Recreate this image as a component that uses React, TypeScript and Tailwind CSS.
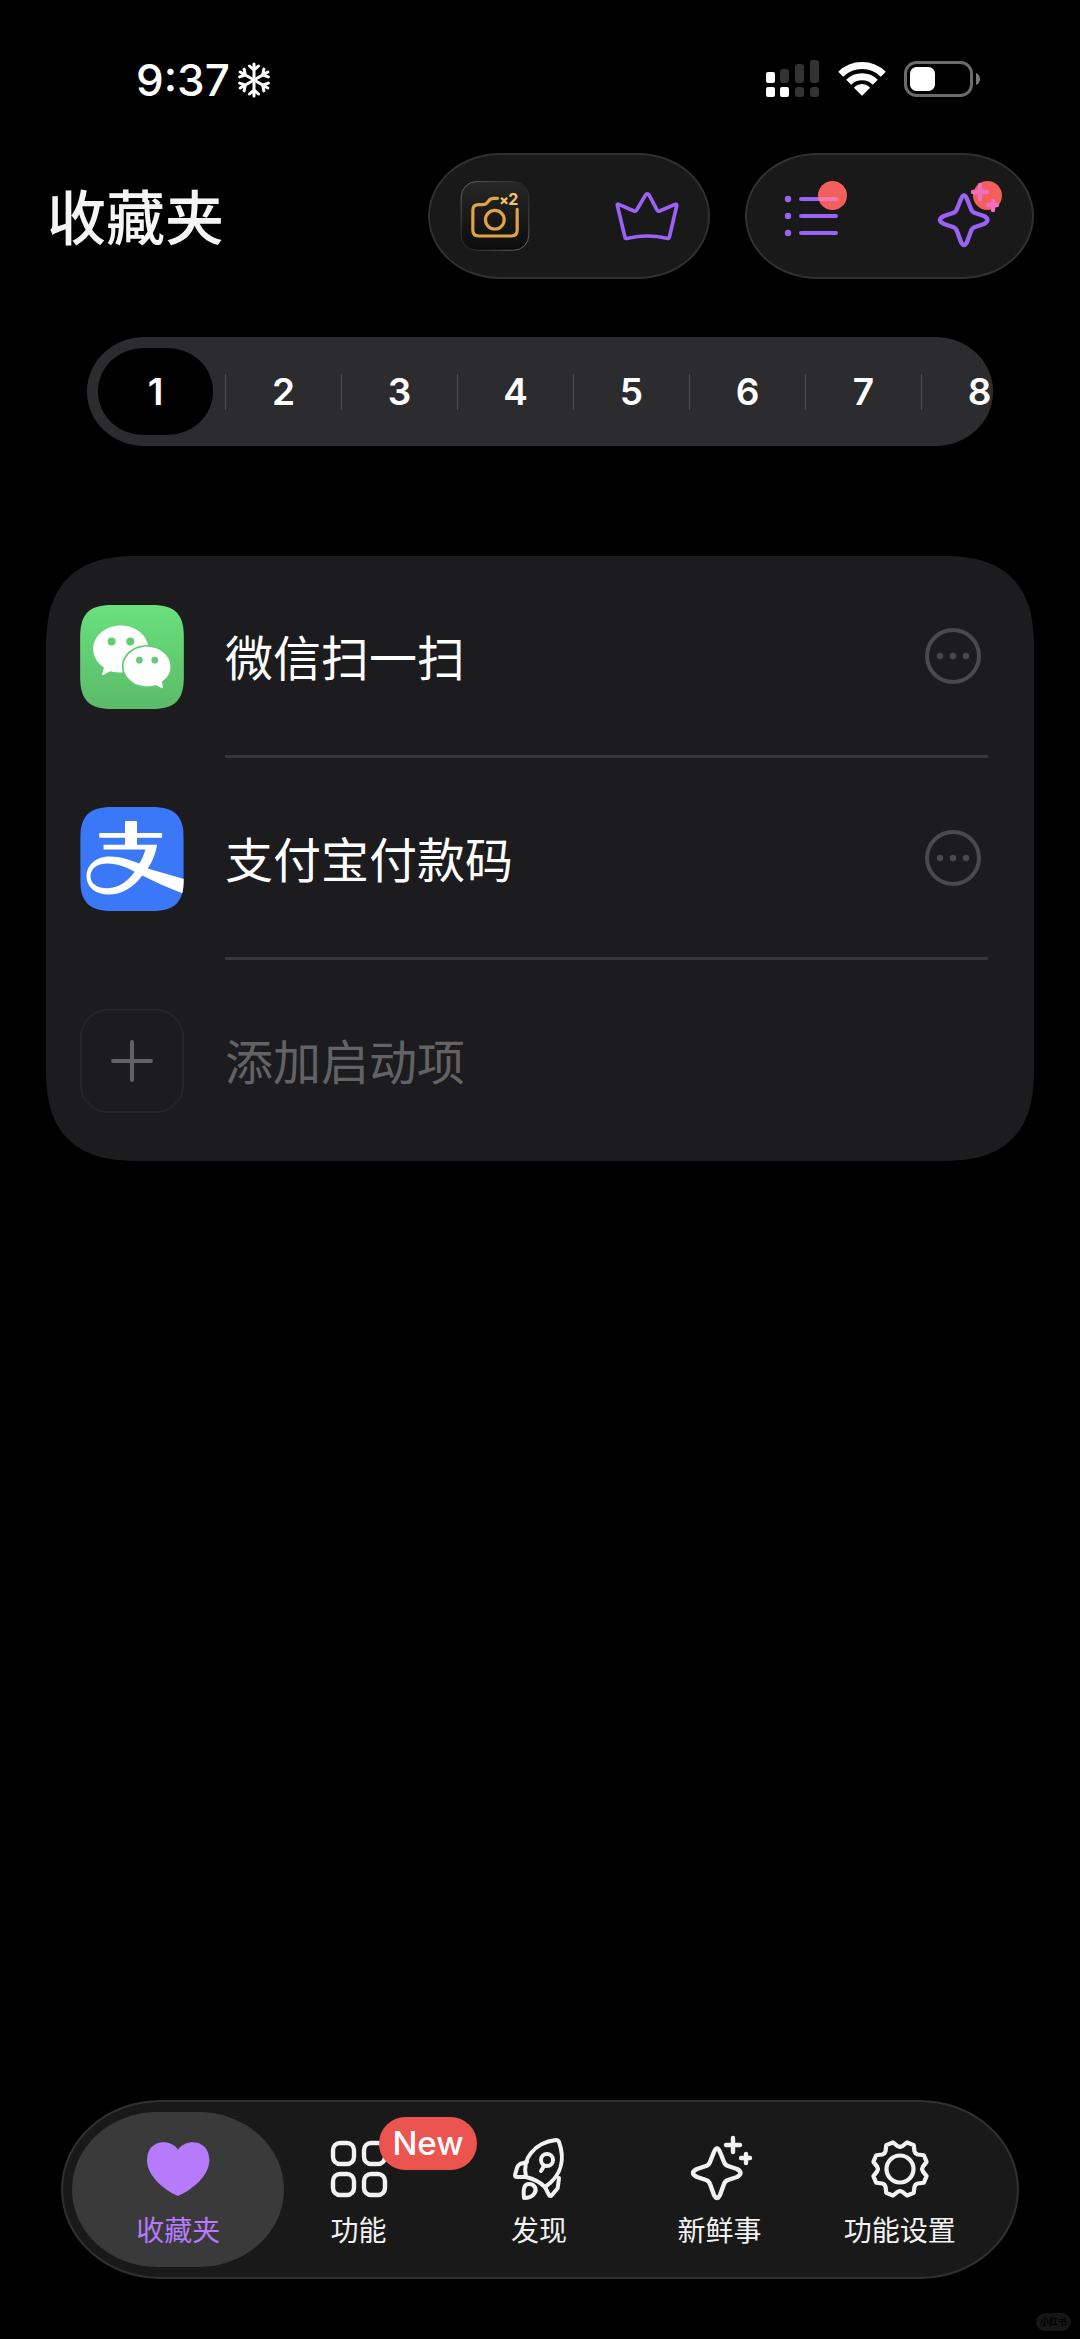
import React, { useState } from 'react'

interface LaunchItem {
  title: string;
  icon: React.ReactNode;
}

interface Tab {
  label: string;
  icon: React.ReactNode;
  badge?: string;
}

interface SparkleProps {
  className: string;
  plusColor?: string;
  dot?: boolean;
}

const pages = [1, 2, 3, 4, 5, 6, 7, 8]

const Snowflake: React.FC = () => (
  <svg viewBox="-18 -18 36 36" className="size-9" fill="none" stroke="white" strokeWidth="3" strokeLinecap="round">
    {[0, 60, 120, 180, 240, 300].map((angle) => (
      <path key={angle} transform={`rotate(${angle})`} d="M0 0V-16M-4.5 -14L0 -10L4.5 -14" />
    ))}
  </svg>
)

const Signal: React.FC = () => (
  <svg viewBox="0 0 54 38" className="h-[38px] w-[54px]">
    <g fill="white">
      <rect x="0" y="12" width="9" height="11" rx="2" />
      <rect x="0" y="27" width="9" height="10" rx="2" />
      <rect x="14" y="27" width="9" height="10" rx="2" />
    </g>
    <g fill="#333333">
      <rect x="14" y="9" width="9" height="14" rx="3" />
      <rect x="29" y="4" width="9" height="19" rx="3" />
      <rect x="44" y="0" width="9" height="23" rx="3" />
      <rect x="29" y="27" width="9" height="10" rx="3" />
      <rect x="44" y="27" width="9" height="10" rx="3" />
    </g>
  </svg>
)

const Wifi: React.FC = () => (
  <svg viewBox="0 0 144 108" className="h-9 w-12" fill="none" stroke="white" strokeWidth="21">
    <path d="M8 40A91 91 0 0 1 136 40" />
    <path d="M32 64A57 57 0 0 1 112 64" />
    <path d="M72 101L51 80A31 31 0 0 1 93 80Z" fill="white" strokeWidth="5" strokeLinejoin="round" />
  </svg>
)

const Battery: React.FC = () => (
  <svg viewBox="0 0 77 36" className="h-9 w-[77px]">
    <rect x="1.5" y="1.5" width="66" height="33" rx="11" fill="none" stroke="#6b6b6b" strokeWidth="3" />
    <rect x="6" y="6" width="25" height="24" rx="6.5" fill="white" />
    <path d="M72 12Q76 13.5 76 18T72 24Z" fill="#7a7a7a" />
  </svg>
)

const CameraTile: React.FC = () => (
  <svg viewBox="120 122 207 210" className="size-[70px]">
    <defs>
      <linearGradient id="tile" x1="0" y1="0" x2="0" y2="1">
        <stop offset="0" stopColor="#272727" />
        <stop offset="1" stopColor="#0c0c0c" />
      </linearGradient>
      <linearGradient id="rim" x1="0" y1="0" x2="1" y2="1">
        <stop offset="0" stopColor="#6a6a6a" />
        <stop offset="0.5" stopColor="#242424" />
        <stop offset="1" stopColor="#6a6a6a" />
      </linearGradient>
    </defs>
    <rect x="122" y="124" width="203" height="206" rx="46" fill="url(#tile)" stroke="url(#rim)" strokeWidth="3" />
    <g fill="none" stroke="#e0a445" strokeWidth="9.5" strokeLinecap="round">
      <path d="M231 174H220Q210 174 204 182L200 187Q195 193 187 193H174Q157 193 157 210V270Q157 287 174 287H273Q290 287 290 270V207" />
      <circle cx="223" cy="238" r="28" />
    </g>
    <text x="236" y="194" fill="#f0c56d" fontSize="42" fontWeight="800" fontFamily="Inter, sans-serif">×</text>
    <text x="263" y="194" fill="#f0c56d" fontSize="48" fontWeight="700" fontFamily="Inter, sans-serif">2</text>
  </svg>
)

const Crown: React.FC = () => (
  <svg viewBox="558 114 216 216" className="size-[72px] overflow-visible" fill="none" stroke="#9a63f6" strokeWidth="11" strokeLinejoin="round">
    <path d="M592 190Q591 185 596 187L642 207Q647 209 650 204L676 160Q682 151 688 160L711 204Q714 209 719 207L765 187Q772 186 770 192L748 286Q746 291 740 289Q681 275 624 289Q616 291 615 286Z" />
  </svg>
)

const ListIcon: React.FC = () => (
  <svg viewBox="0 0 72 72" className="size-[72px]">
    <g fill="#9a63f6">
      <circle cx="11" cy="19" r="3.2" />
      <circle cx="11" cy="36" r="3.2" />
      <circle cx="11" cy="53" r="3.2" />
      <rect x="22" y="17" width="39" height="4" rx="2" />
      <rect x="22" y="34" width="39" height="4" rx="2" />
      <rect x="22" y="51" width="39" height="4" rx="2" />
    </g>
    <circle cx="55.5" cy="15.5" r="14.5" fill="#f25f5c" />
    <path d="M43 19H59" stroke="#f877ad" strokeWidth="4" strokeLinecap="round" />
  </svg>
)

const Sparkle: React.FC<SparkleProps> = ({ className, plusColor = 'currentColor', dot = false }) => (
  <svg viewBox="-36 -36 72 72" className={className} fill="none" stroke="currentColor" strokeWidth="4.4" strokeLinecap="round" strokeLinejoin="round">
    {dot && <circle cx="21.5" cy="-20.5" r="14.5" fill="#f25f5c" stroke="none" />}
    <path d="M-5 -17Q-2 -24 1 -17L5 -7Q6 -4 9 -3L18 0Q25 4 18 8L9 11Q6 12 5 15L1 26Q-2 32 -5 26L-9 15Q-10 12 -13 11L-22 8Q-30 4 -22 0L-13 -3Q-10 -4 -9 -7Z" />
    <path d="M14 -31V-17M7 -24H21M27 -15V-6M22 -11H31" stroke={plusColor} />
  </svg>
)

const WeChatIcon: React.FC = () => (
  <svg viewBox="123 195 310 311" className="size-[104px]">
    <defs>
      <linearGradient id="green" x1="0" y1="0" x2="0" y2="1">
        <stop offset="0" stopColor="#6ae07d" />
        <stop offset="1" stopColor="#5bbb69" />
      </linearGradient>
    </defs>
    <path d="M123 290C123 222 150 195 218 195H338C406 195 433 222 433 290V411C433 479 406 506 338 506H218C150 506 123 479 123 411Z" fill="url(#green)" />
    <path d="M244 256C290 256 327 287 327 326C327 365 290 397 244 397Q228 397 213 393L191 405Q187 406 189 401L194 382C174 369 162 349 162 326C162 287 199 256 244 256Z" fill="white" />
    <path d="M323 320C285 320 253 346 253 379C253 412 285 438 323 438Q338 438 350 434L366 443Q371 445 370 440L367 424C384 413 393 397 393 379C393 346 361 320 323 320Z" fill="white" stroke="#62cc73" strokeWidth="11" paintOrder="stroke" />
    <g fill="#62cc73">
      <circle cx="217" cy="304" r="12" />
      <circle cx="273" cy="304" r="12" />
      <circle cx="300" cy="360" r="10" />
      <circle cx="346" cy="360" r="10" />
    </g>
  </svg>
)

const AlipayIcon: React.FC = () => (
  <svg viewBox="123 799 310 311" className="size-[104px]">
    <clipPath id="round">
      <path d="M123 894C123 826 150 799 218 799H338C406 799 433 826 433 894V1015C433 1083 406 1110 338 1110H218C150 1110 123 1083 123 1015Z" />
    </clipPath>
    <g clipPath="url(#round)">
      <rect x="123" y="799" width="310" height="311" fill="#3a78f8" />
      <g fill="white">
        <rect x="257" y="841" width="36" height="76" rx="3" />
        <rect x="180" y="877" width="188" height="14" rx="2" />
        <path
          fillRule="evenodd"
          d="M193 912H353C349 937 339 963 325 983L436 1015V1060C390 1043 347 1024 309 1004C284 1037 249 1061 208 1061C166 1061 142 1036 142 1007C142 969 174 947 212 947C244 947 273 957 300 968C308 955 314 941 318 926H193ZM286 993C262 979 235 968 205 968C170 968 154 985 154 1007C154 1029 174 1042 205 1042C240 1042 267 1019 286 993Z"
        />
      </g>
    </g>
  </svg>
)

const HeartIcon: React.FC = () => (
  <svg viewBox="323 172 190 190" className="size-16" fill="currentColor">
    <path d="M418 210C396 175 326 178 326 241C326 288 378 330 418 347C458 330 511 288 511 241C511 178 441 175 418 210Z" />
  </svg>
)

const GridIcon: React.FC = () => (
  <svg viewBox="0 0 64 64" className="size-16" fill="none" stroke="currentColor" strokeWidth="4.4">
    <rect x="6" y="6" width="21" height="21" rx="7" />
    <rect x="37" y="6" width="21" height="21" rx="7" />
    <rect x="6" y="37" width="21" height="21" rx="7" />
    <rect x="37" y="37" width="21" height="21" rx="7" />
  </svg>
)

const RocketIcon: React.FC = () => (
  <svg viewBox="0 0 64 64" className="size-16" fill="none" stroke="currentColor" strokeWidth="4" strokeLinecap="round" strokeLinejoin="round">
    <path d="M19 40C17 31 19 22 24 16C31 7 40 4 49 3Q51 3 52 5C57 19 57 37 38 50C33 45 27 42 19 40Z" />
    <path d="M20 25L13 27Q11 28 10 31L8 38Q8 40 10 40H19" />
    <path d="M38 50L42 58Q43 60 45 58L50 52Q51 51 51 49L52 41" />
    <circle cx="40" cy="23" r="6" />
    <path d="M37 29L34 34" />
    <path d="M17 61C16 52 17 47 22 47C27 47 31 52 27 57Q24 61 17 61Z" />
  </svg>
)

// eight teeth, notches on the axes and diagonals
const gearPath = Array.from({ length: 8 })
  .flatMap((_, i) => [[0, 22], [6, 23], [15, 27.5], [30, 27.5], [39, 23]].map(([angle, r]) => {
    const a = ((i * 45 + angle) * Math.PI) / 180
    return `${(32 + r * Math.cos(a)).toFixed(2)} ${(32 + r * Math.sin(a)).toFixed(2)}`
  }))
  .join('L')

const GearIcon: React.FC = () => (
  <svg viewBox="0 0 64 64" className="size-16" fill="none" stroke="currentColor" strokeWidth="4.2" strokeLinejoin="round">
    <path d={`M${gearPath}Z`} />
    <circle cx="32" cy="32" r="13.5" />
  </svg>
)

const items: LaunchItem[] = [
  { title: '微信扫一扫', icon: <WeChatIcon /> },
  { title: '支付宝付款码', icon: <AlipayIcon /> },
]

const tabs: Tab[] = [
  { label: '收藏夹', icon: <HeartIcon /> },
  { label: '功能', icon: <GridIcon />, badge: 'New' },
  { label: '发现', icon: <RocketIcon /> },
  { label: '新鲜事', icon: <Sparkle className="size-[72px] -m-1" /> },
  { label: '功能设置', icon: <GearIcon /> },
]

const StatusBar: React.FC = () => (
  <div className="flex items-center justify-between pt-[52px] pb-[47px] pl-[136px] pr-[99px]">
    <div className="flex items-center gap-[6px] pt-[2px]">
      <span className="text-[44px] leading-[52px] font-medium">9:37</span>
      <Snowflake />
    </div>
    <div className="flex items-center gap-[18px]">
      <Signal />
      <Wifi />
      <Battery />
    </div>
  </div>
)

const Header: React.FC = () => (
  <header className="flex items-center justify-between pl-[47px] pr-[46px]">
    <h1 className="pt-[6px] text-[59px] leading-[72px] font-medium text-[#f5f5f5]">收藏夹</h1>
    <div className="flex gap-[35px]">
      <div className="flex h-[126px] items-center gap-[76px] rounded-[72px/63px] border-2 border-[#303030] bg-[#191919] px-[30px]">
        <button aria-label="camera"><CameraTile /></button>
        <button aria-label="crown"><Crown /></button>
      </div>
      <div className="flex h-[126px] items-center gap-[81px] rounded-[72px/63px] border-2 border-[#303030] bg-[#191919] px-[30px]">
        <button aria-label="list"><ListIcon /></button>
        <button aria-label="new">
          <Sparkle className="size-[72px] text-[#9a63f6]" plusColor="#f070bd" dot />
        </button>
      </div>
    </div>
  </header>
)

function App() {
  const [page, setPage] = useState(1)
  const [tab, setTab] = useState('收藏夹')

  return (
    <div className="relative flex min-h-screen flex-col bg-black text-white font-['Inter','Noto_Sans_CJK_SC',sans-serif]">
      <StatusBar />
      <Header />
      <div className="mx-[87px] mt-[58px] flex h-[109px] items-center overflow-hidden rounded-[58px/54px] bg-[#2c2c2e] pl-[11px]">
        {pages.map((n) => (
          <React.Fragment key={n}>
            {n > 1 && <span className={`h-9 w-px shrink-0 bg-[#4e4e50] ${n === 2 ? 'ml-3' : ''}`} />}
            <button
              onClick={() => setPage(n)}
              className={`h-[87px] w-[115px] shrink-0 rounded-[46px/43px] text-[37px] font-semibold ${n === page ? 'bg-black' : ''}`}
            >
              {n}
            </button>
          </React.Fragment>
        ))}
      </div>

      <ul className="mx-[46px] mt-[110px] rounded-[95px] [corner-shape:superellipse(1.4)] bg-[#1c1c1e] pl-[34px] text-[48px]">
        {items.map(({ title, icon }) => (
          <li key={title} className="flex h-[202px] items-center gap-[41px]">
            {icon}
            <div className="mr-[46px] flex h-full flex-1 items-center justify-between border-b-3 border-[#363638] pr-[7px]">
              <span className="pt-[6px]">{title}</span>
              <button aria-label="more">
                <svg viewBox="0 0 56 56" className="size-14" fill="#4a4a4c">
                  <circle cx="28" cy="28" r="26" fill="none" stroke="#4a4a4c" strokeWidth="4" />
                  <circle cx="15" cy="28" r="3.2" />
                  <circle cx="28" cy="28" r="3.2" />
                  <circle cx="41" cy="28" r="3.2" />
                </svg>
              </button>
            </div>
          </li>
        ))}
        <li>
          <button className="flex h-[201px] w-full items-center gap-[41px] text-[#636365]">
            <span className="flex size-[104px] items-center justify-center rounded-[28px] border-2 border-[#262628]">
              <svg viewBox="0 0 42 42" className="size-[42px]" stroke="currentColor" strokeWidth="4" strokeLinecap="round">
                <path d="M21 2V40M2 21H40" />
              </svg>
            </span>
            <span className="pt-1">添加启动项</span>
          </button>
        </li>
      </ul>

      <nav className="mx-[61px] mt-auto mb-[60px] flex rounded-[100px/90px] border-2 border-[#303030] bg-[#191919] pl-[25px] pr-[27px] py-[10px]">
        {tabs.map(({ label, icon, badge }) => (
          <button
            key={label}
            onClick={() => setTab(label)}
            className={`relative flex h-[155px] flex-1 flex-col items-center gap-[9px] pt-[25px] ${label === tab ? 'text-[#b57bfa]' : 'text-[#f2f2f2]'}`}
          >
            {label === tab && <span className="absolute -inset-x-4 inset-y-0 rounded-[86px/78px] bg-[#3a3a3a]" />}
            <span className="relative">{icon}</span>
            <span className="relative text-[28px] leading-[42px]">{label}</span>
            {badge && (
              <span className="absolute top-[5px] left-[111px] rounded-full bg-[#ec544f] px-[13px] text-[33px] leading-[53px] font-medium text-white">
                {badge}
              </span>
            )}
          </button>
        ))}
      </nav>

      <span className="absolute right-[9px] bottom-2 rounded-full bg-[#161616] px-1 text-[9px] leading-[18px] font-bold text-black">小红书</span>
    </div>
  )
}

export default App
